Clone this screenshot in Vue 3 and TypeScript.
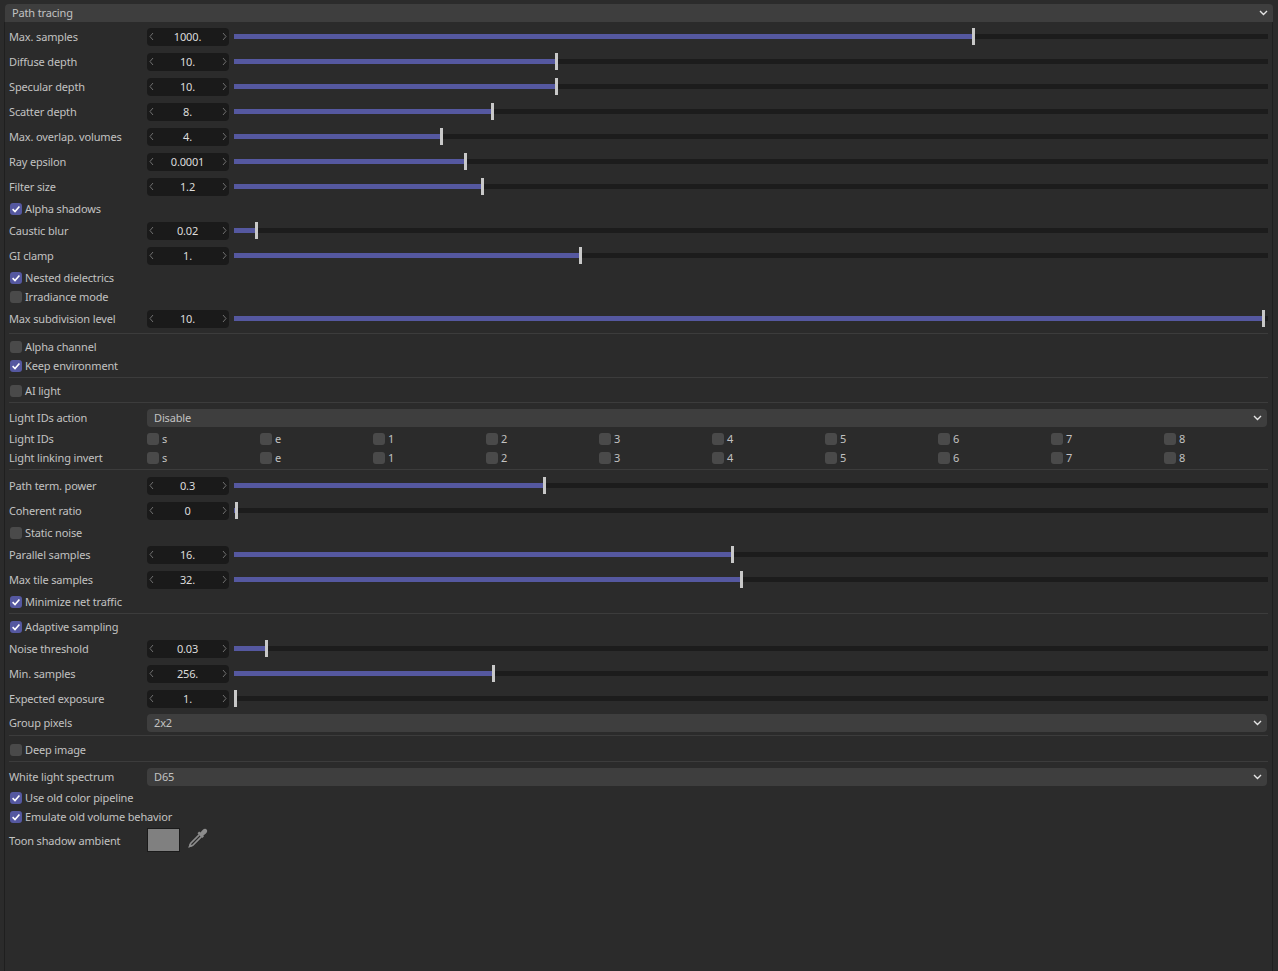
<script setup lang="ts">
type Item =
  | { kind: 'slider'; label: string; value: string; x: number }
  | { kind: 'check'; label: string; on: boolean }
  | { kind: 'select'; label: string; value: string }
  | { kind: 'ids'; label: string }
  | { kind: 'sep' }
  | { kind: 'color'; label: string }

const items: Item[] = [
  { kind: 'slider', label: 'Max. samples', value: '1000.', x: 973 },
  { kind: 'slider', label: 'Diffuse depth', value: '10.', x: 556 },
  { kind: 'slider', label: 'Specular depth', value: '10.', x: 556 },
  { kind: 'slider', label: 'Scatter depth', value: '8.', x: 492 },
  { kind: 'slider', label: 'Max. overlap. volumes', value: '4.', x: 441 },
  { kind: 'slider', label: 'Ray epsilon', value: '0.0001', x: 465 },
  { kind: 'slider', label: 'Filter size', value: '1.2', x: 482 },
  { kind: 'check', label: 'Alpha shadows', on: true },
  { kind: 'slider', label: 'Caustic blur', value: '0.02', x: 256 },
  { kind: 'slider', label: 'GI clamp', value: '1.', x: 580 },
  { kind: 'check', label: 'Nested dielectrics', on: true },
  { kind: 'check', label: 'Irradiance mode', on: false },
  { kind: 'slider', label: 'Max subdivision level', value: '10.', x: 1263 },
  { kind: 'sep' },
  { kind: 'check', label: 'Alpha channel', on: false },
  { kind: 'check', label: 'Keep environment', on: true },
  { kind: 'sep' },
  { kind: 'check', label: 'AI light', on: false },
  { kind: 'sep' },
  { kind: 'select', label: 'Light IDs action', value: 'Disable' },
  { kind: 'ids', label: 'Light IDs' },
  { kind: 'ids', label: 'Light linking invert' },
  { kind: 'sep' },
  { kind: 'slider', label: 'Path term. power', value: '0.3', x: 544 },
  { kind: 'slider', label: 'Coherent ratio', value: '0', x: 236 },
  { kind: 'check', label: 'Static noise', on: false },
  { kind: 'slider', label: 'Parallel samples', value: '16.', x: 732 },
  { kind: 'slider', label: 'Max tile samples', value: '32.', x: 741 },
  { kind: 'check', label: 'Minimize net traffic', on: true },
  { kind: 'sep' },
  { kind: 'check', label: 'Adaptive sampling', on: true },
  { kind: 'slider', label: 'Noise threshold', value: '0.03', x: 266 },
  { kind: 'slider', label: 'Min. samples', value: '256.', x: 493 },
  { kind: 'slider', label: 'Expected exposure', value: '1.', x: 235 },
  { kind: 'select', label: 'Group pixels', value: '2x2' },
  { kind: 'sep' },
  { kind: 'check', label: 'Deep image', on: false },
  { kind: 'sep' },
  { kind: 'select', label: 'White light spectrum', value: 'D65' },
  { kind: 'check', label: 'Use old color pipeline', on: true },
  { kind: 'check', label: 'Emulate old volume behavior', on: true },
  { kind: 'color', label: 'Toon shadow ambient' },
]

const ids = ['s', 'e', '1', '2', '3', '4', '5', '6', '7', '8']
const pct = (x: number) => `${((x - 234) / 1034) * 100}%`
</script>

<template>
  <div class="page">
    <div class="header">
      <span>Path tracing</span>
      <svg class="chev" width="9" height="6" viewBox="0 0 9 6"><path d="M1 1l3.5 3.5L8 1" /></svg>
    </div>
    <div class="panel">
      <template v-for="(it, i) in items" :key="i">
        <div v-if="it.kind === 'sep'" class="sep"></div>

        <div v-else-if="it.kind === 'slider'" class="row slider-row">
          <div class="label">{{ it.label }}</div>
          <div class="spin">
            <svg width="5" height="9" viewBox="0 0 5 9"><path d="M4 1L1 4.5 4 8" /></svg>
            <span class="num">{{ it.value }}</span>
            <svg width="5" height="9" viewBox="0 0 5 9"><path d="M1 1l3 3.5L1 8" /></svg>
          </div>
          <div class="track">
            <div class="fill" :style="{ width: pct(it.x) }"></div>
            <div class="thumb" :style="{ left: pct(it.x) }"></div>
          </div>
        </div>

        <div v-else-if="it.kind === 'check'" class="row check-row">
          <span class="box" :class="{ on: it.on }">
            <svg v-if="it.on" width="12" height="12" viewBox="0 0 12 12"><path d="M2.6 6.2l2.4 2.3 4.4-5" /></svg>
          </span>
          <span class="check-label">{{ it.label }}</span>
        </div>

        <div v-else-if="it.kind === 'select'" class="row select-row">
          <div class="label">{{ it.label }}</div>
          <div class="select">
            <span>{{ it.value }}</span>
            <svg class="chev" width="9" height="6" viewBox="0 0 9 6"><path d="M1 1l3.5 3.5L8 1" /></svg>
          </div>
        </div>

        <div v-else-if="it.kind === 'ids'" class="row ids-row">
          <div class="label">{{ it.label }}</div>
          <div class="ids">
            <div v-for="id in ids" :key="id" class="id">
              <span class="box"></span><span class="id-text">{{ id }}</span>
            </div>
          </div>
        </div>

        <div v-else class="row color-row">
          <div class="label">{{ it.label }}</div>
          <div class="swatch"></div>
          <svg class="dropper" width="22" height="22" viewBox="0 0 22 22">
            <path class="bulb" d="M13.4 5.6l2.2-2.5c1.3-1.4 3-1.7 4-.7s.7 2.7-.7 4l-2.5 2.2.5.8-1.6 1.6-4.8-4.8 1.6-1.6z" />
            <path class="body" d="M12.4 7.6L3.8 16.2 2.6 19.4l3.2-1.2 8.6-8.6" />
            <path class="tip" d="M1.6 20.4l1.1-3.8 2.7 2.7z" />
          </svg>
        </div>
      </template>
    </div>
  </div>
</template>

<style>
html, body { margin: 0; background: #2b2b2b; }
</style>

<style scoped>
.page {
  width: 1278px;
  height: 971px;
  box-sizing: border-box;
  padding: 4px 5px 0 4px;
  background: #2b2b2b;
  overflow: hidden;
  display: flex;
  flex-direction: column;
  font: 11px/16px "Noto Sans", "Liberation Sans", sans-serif;
  letter-spacing: -0.15px;
  color: #c2c2c2;
}
.header {
  height: 18px;
  margin-left: 1px;
  padding: 0 5px 0 7px;
  background: #3e3e3e;
  border-radius: 4px 4px 0 0;
  display: flex;
  align-items: center;
  justify-content: space-between;
  flex: none;
}
.chev path { fill: none; stroke: #e4e4e4; stroke-width: 1.4; }
.panel {
  flex: 1;
  border-left: 1px solid #1f1f1f;
  border-right: 1px solid #1f1f1f;
  padding: 2px 4px 0 4px;
}
.row { display: flex; align-items: center; }
.label { width: 138px; flex: none; white-space: nowrap; }
.slider-row { height: 25px; }
.check-row { height: 19px; padding-left: 1px; }
.select-row { height: 23px; }
.ids-row { height: 19px; }
.color-row { height: 29px; }
.spin {
  width: 82px;
  height: 18px;
  flex: none;
  padding: 0 2px;
  box-sizing: border-box;
  background: #1a1a1a;
  border-radius: 4px;
  display: flex;
  align-items: center;
  justify-content: space-between;
}
.spin path { fill: none; stroke: #707070; stroke-width: 1; }
.num { color: #dcdcdc; flex: 1; text-align: center; padding-right: 1px; }
.track {
  position: relative;
  width: 1034px;
  height: 5px;
  margin-left: 5px;
  background: #1c1c1c;
  flex: none;
}
.fill { height: 100%; background: #5558a0; }
.thumb {
  position: absolute;
  top: -6px;
  width: 3px;
  height: 17px;
  margin-left: -1px;
  background: #c8c8c8;
}
.box {
  width: 12px;
  height: 12px;
  flex: none;
  border-radius: 3px;
  background: #4a4a4a;
  display: block;
}
.box.on { background: #5558a0; }
.box svg { display: block; }
.box path { fill: none; stroke: #fff; stroke-width: 1.6; }
.check-label { margin-left: 3px; white-space: nowrap; }
.select {
  width: 1120px;
  height: 18px;
  flex: none;
  box-sizing: border-box;
  padding: 0 5px 0 7px;
  background: #3e3e3e;
  border-radius: 4px;
  display: flex;
  align-items: center;
  justify-content: space-between;
}
.ids { display: flex; }
.id { width: 113px; display: flex; align-items: center; }
.id-text { margin-left: 3px; }
.swatch {
  width: 33px;
  height: 24px;
  box-sizing: border-box;
  border: 1px solid #1a1a1a;
  background: #808080;
  flex: none;
  margin-bottom: 2px;
}
.dropper { margin-left: 7px; margin-bottom: 6px; flex: none; }
.bulb, .tip { fill: #8c8c8c; }
.body { fill: none; stroke: #8c8c8c; stroke-width: 1.6; }
.sep { height: 1px; margin: 2px 0 3px; background: #3c3c3c; }
.select-row + .sep { margin: 1px 0 4px; }
</style>
